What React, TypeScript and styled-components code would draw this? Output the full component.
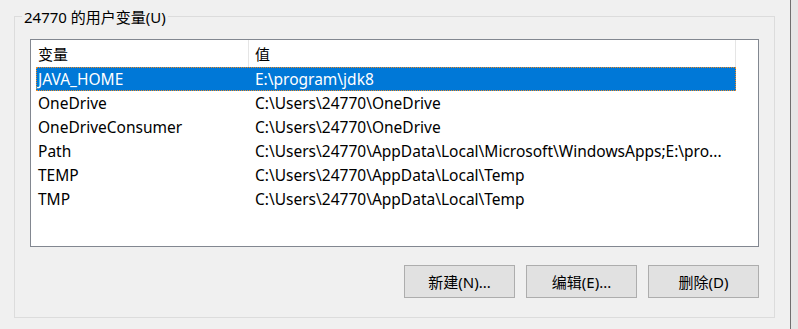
import React from "react";
import styled, { createGlobalStyle } from "styled-components";

const Global = createGlobalStyle`
  html, body { margin: 0; padding: 0; background: #f0f0f0; }
  body {
    font-family: "Noto Sans", "Noto Sans CJK SC", sans-serif;
    font-size: 15px;
    color: #000;
  }
`;

const Window = styled.div`
  width: 798px;
  height: 329px;
  display: flex;
  background: #f0f0f0;
  overflow: hidden;
`;

const Main = styled.div`
  width: 790px;
  box-sizing: border-box;
  padding: 16px 15px 11px 14px;
`;

const Edge = styled.div`
  width: 1px;
  background: #6f6f6f;
`;

const Strip = styled.div`
  flex: 1;
  background: #e6e6e6;
`;

const Group = styled.div`
  height: 302px;
  box-sizing: border-box;
  border: 1px solid #dcdcdc;
  padding: 0 15px 19px 15px;
  display: flex;
  flex-direction: column;
`;

const Legend = styled.div`
  align-self: flex-start;
  margin: -10px 0 0 -8px;
  padding: 0 2px;
  height: 20px;
  line-height: 20px;
  background: #f0f0f0;
  white-space: nowrap;
`;

const List = styled.div`
  margin-top: 12px;
  height: 208px;
  box-sizing: border-box;
  border: 1px solid #828790;
  background: #fff;
`;

const Header = styled.div`
  display: flex;
  height: 27px;
`;

const HeaderCell = styled.div<{ $w: number; $pad: number }>`
  width: ${(p) => p.$w}px;
  box-sizing: border-box;
  padding-left: ${(p) => p.$pad}px;
  border-right: 1px solid #e5e5e5;
  display: flex;
  align-items: center;
  white-space: nowrap;
`;

const Row = styled.div<{ $selected?: boolean }>`
  display: flex;
  height: 24px;
  width: 700px;
  margin-left: 5px;
  align-items: center;
  white-space: nowrap;
  font-size: 15.5px;
  background: ${(p) => (p.$selected ? "#0078d7" : "transparent")};
  color: ${(p) => (p.$selected ? "#fff" : "#000")};
  outline: ${(p) => (p.$selected ? "1px dotted #f08a22" : "none")};
  outline-offset: -1px;
`;

const NameCell = styled.div`
  width: 212px;
  box-sizing: border-box;
  padding-left: 2px;
  overflow: hidden;
`;

const ValueCell = styled.div`
  flex: 1;
  box-sizing: border-box;
  padding-left: 7px;
  overflow: hidden;
`;

const ButtonRow = styled.div`
  display: flex;
  justify-content: flex-end;
  gap: 11px;
  margin-top: 18px;
`;

const Button = styled.button`
  width: 111px;
  height: 33px;
  box-sizing: border-box;
  border: 1px solid #adadad;
  background: #e1e1e1;
  font-family: inherit;
  font-size: 15px;
  color: #000;
  padding: 0;
`;

const rows: { name: string; value: string; selected?: boolean }[] = [
  { name: "JAVA_HOME", value: "E:\\program\\jdk8", selected: true },
  { name: "OneDrive", value: "C:\\Users\\24770\\OneDrive" },
  { name: "OneDriveConsumer", value: "C:\\Users\\24770\\OneDrive" },
  {
    name: "Path",
    value: "C:\\Users\\24770\\AppData\\Local\\Microsoft\\WindowsApps;E:\\pro...",
  },
  { name: "TEMP", value: "C:\\Users\\24770\\AppData\\Local\\Temp" },
  { name: "TMP", value: "C:\\Users\\24770\\AppData\\Local\\Temp" },
];

export default function App() {
  return (
    <>
      <Global />
      <Window>
        <Main>
          <Group>
            <Legend>24770 的用户变量(U)</Legend>
            <List>
              <Header>
                <HeaderCell $w={218} $pad={7}>变量</HeaderCell>
                <HeaderCell $w={487} $pad={6}>值</HeaderCell>
              </Header>
              {rows.map((r) => (
                <Row key={r.name} $selected={r.selected}>
                  <NameCell>{r.name}</NameCell>
                  <ValueCell>{r.value}</ValueCell>
                </Row>
              ))}
            </List>
            <ButtonRow>
              <Button>新建(N)...</Button>
              <Button>编辑(E)...</Button>
              <Button>删除(D)</Button>
            </ButtonRow>
          </Group>
        </Main>
        <Edge />
        <Strip />
      </Window>
    </>
  );
}
